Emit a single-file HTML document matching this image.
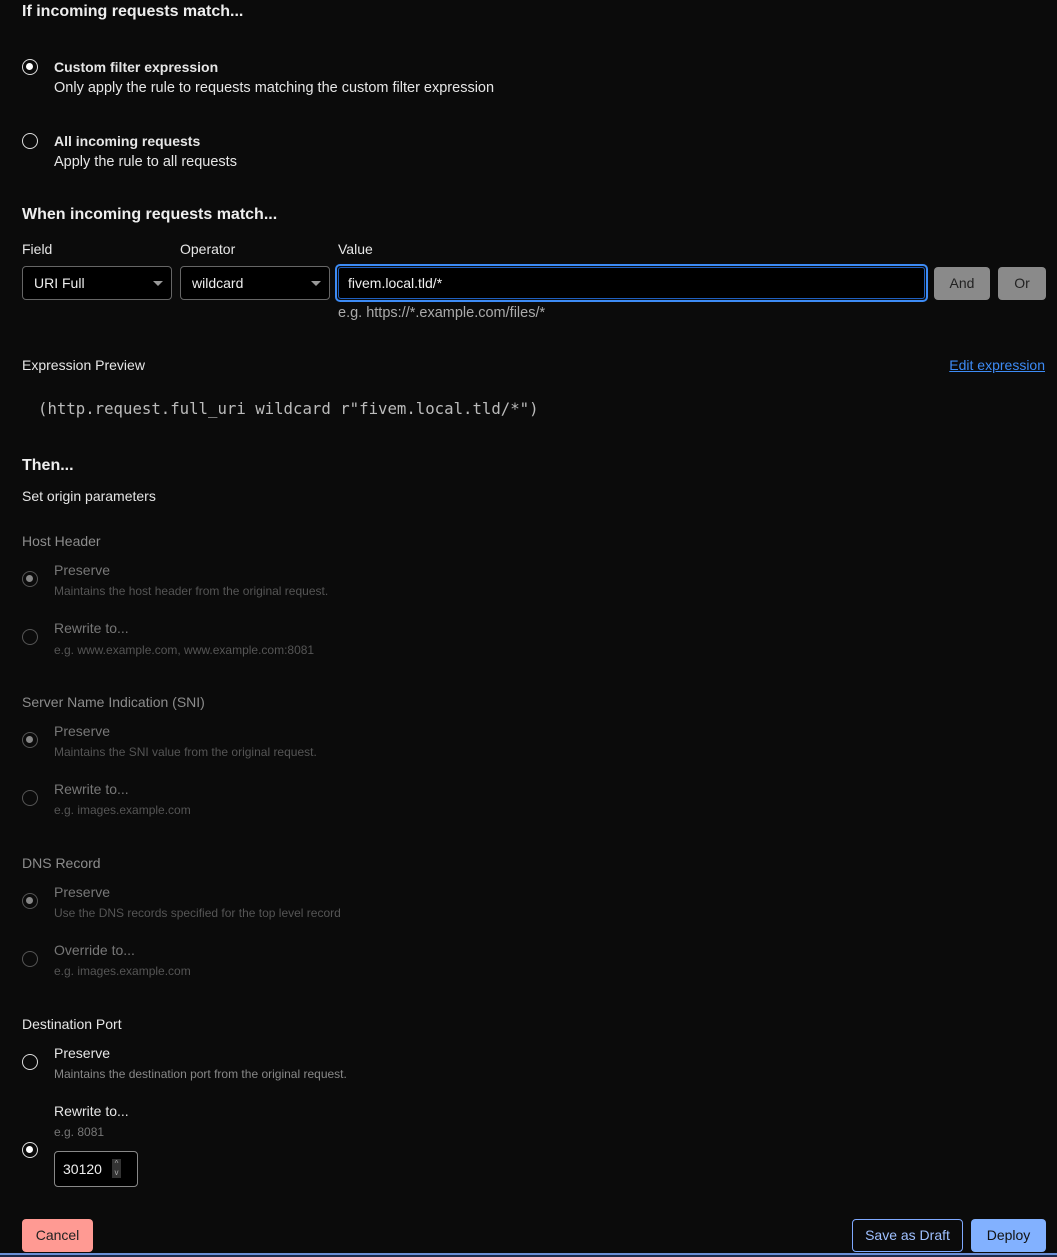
<!DOCTYPE html>
<html><head><meta charset="utf-8"><style>
*{box-sizing:border-box;margin:0;padding:0}
body{width:1057px;height:1257px;background:#0b0b0b;position:relative;overflow:hidden;font-family:"Liberation Sans",sans-serif;color:#e6e6e6}
.t{position:absolute;line-height:20px;white-space:nowrap}
.h{font-weight:bold;font-size:16px;color:#eee}
.s{font-size:14px}
.d{font-size:14.5px}
.g{font-size:12px;color:#555}
.gt{font-size:14px;color:#777}
.lbl{font-size:14px;color:#8c8c8c}
.r{position:absolute;left:22px;width:16px;height:16px;border-radius:50%;border:1.5px solid #ddd}
.r.on::after{content:"";position:absolute;left:3px;top:3px;width:7px;height:7px;border-radius:50%;background:#fff}
.r.dis{border-color:#555}
.r.dis.on::after{background:#888}
.sel{position:absolute;top:266px;height:34px;border:1px solid #666;border-radius:4px;background:#000;font-size:14px;line-height:32px;padding-left:11px;color:#eee}
.sel::after{content:"";position:absolute;right:8px;top:14px;border-left:5px solid transparent;border-right:5px solid transparent;border-top:5px solid #999}
.btn{position:absolute;border-radius:4px;font-size:14px;text-align:center}
</style></head><body>
<div class="t h" style="left:22px;top:2px">If incoming requests match...</div>
<div class="r on" style="top:59px"></div>
<div class="t s" style="left:54px;top:57px;font-weight:bold">Custom filter expression</div>
<div class="t d" style="left:54px;top:78px">Only apply the rule to requests matching the custom filter expression</div>
<div class="r" style="top:133px"></div>
<div class="t s" style="left:54px;top:131px;font-weight:bold">All incoming requests</div>
<div class="t d" style="left:54px;top:152px">Apply the rule to all requests</div>
<div class="t h" style="left:22px;top:205px">When incoming requests match...</div>
<div class="t s" style="left:22px;top:239px">Field</div>
<div class="t s" style="left:180px;top:239px">Operator</div>
<div class="t s" style="left:338px;top:239px">Value</div>
<div class="sel" style="left:22px;width:150px">URI Full</div>
<div class="sel" style="left:180px;width:150px">wildcard</div>
<div style="position:absolute;left:335px;top:264px;width:593px;height:38px;border:2px solid #3d8bf5;border-radius:5px;padding:1px"><div style="width:100%;height:100%;border:1px solid #1f5fbf;border-radius:3px;background:#000;font-size:14px;line-height:30px;padding-left:9px;color:#eee">fivem.local.tld/*</div></div>
<div class="btn" style="left:934px;top:267px;width:56px;height:33px;line-height:33px;background:#8a8a8a;color:#222">And</div>
<div class="btn" style="left:998px;top:267px;width:48px;height:33px;line-height:33px;background:#8a8a8a;color:#222">Or</div>
<div class="t" style="left:338px;top:303px;font-size:14.5px;color:#aaa">e.g. https://*.example.com/files/*</div>
<div class="t s" style="left:22px;top:355px">Expression Preview</div>
<div class="t s" style="right:12px;top:355px;color:#3d8bf5;text-decoration:underline">Edit expression</div>
<div class="t" style="left:38px;top:399px;font-family:'DejaVu Sans Mono','Liberation Mono',monospace;font-size:15.7px;color:#bbb">(http.request.full_uri wildcard r"fivem.local.tld/*")</div>
<div class="t h" style="left:22px;top:456px">Then...</div>
<div class="t s" style="left:22px;top:486px">Set origin parameters</div>

<div class="t lbl" style="left:22px;top:531px">Host Header</div>
<div class="r dis on" style="top:571px"></div>
<div class="t gt" style="left:54px;top:560px">Preserve</div>
<div class="t g" style="left:54px;top:581px">Maintains the host header from the original request.</div>
<div class="r dis" style="top:629px"></div>
<div class="t gt" style="left:54px;top:618px">Rewrite to...</div>
<div class="t g" style="left:54px;top:640px">e.g. www.example.com, www.example.com:8081</div>

<div class="t lbl" style="left:22px;top:692px">Server Name Indication (SNI)</div>
<div class="r dis on" style="top:732px"></div>
<div class="t gt" style="left:54px;top:721px">Preserve</div>
<div class="t g" style="left:54px;top:742px">Maintains the SNI value from the original request.</div>
<div class="r dis" style="top:790px"></div>
<div class="t gt" style="left:54px;top:779px">Rewrite to...</div>
<div class="t g" style="left:54px;top:800px">e.g. images.example.com</div>

<div class="t lbl" style="left:22px;top:853px">DNS Record</div>
<div class="r dis on" style="top:893px"></div>
<div class="t gt" style="left:54px;top:882px">Preserve</div>
<div class="t g" style="left:54px;top:903px">Use the DNS records specified for the top level record</div>
<div class="r dis" style="top:951px"></div>
<div class="t gt" style="left:54px;top:940px">Override to...</div>
<div class="t g" style="left:54px;top:961px">e.g. images.example.com</div>

<div class="t s" style="left:22px;top:1014px">Destination Port</div>
<div class="r" style="top:1054px"></div>
<div class="t s" style="left:54px;top:1043px">Preserve</div>
<div class="t g" style="left:54px;top:1064px;color:#888">Maintains the destination port from the original request.</div>
<div class="r on" style="top:1142px"></div>
<div class="t s" style="left:54px;top:1101px">Rewrite to...</div>
<div class="t g" style="left:54px;top:1122px;color:#777">e.g. 8081</div>
<div style="position:absolute;left:54px;top:1151px;width:84px;height:36px;border:1px solid #888;border-radius:4px;background:#000;font-size:14px;line-height:34px;padding-left:8px;color:#eee">30120<span style="position:absolute;left:57px;top:7px;width:9px;height:19px;background:#333;font-size:8px;line-height:9px;text-align:center;color:#aaa">^<br>v</span></div>

<div class="btn" style="left:22px;top:1219px;width:71px;height:33px;line-height:33px;background:#ff9a93;color:#222">Cancel</div>
<div class="btn" style="left:852px;top:1219px;width:111px;height:33px;line-height:31px;border:1px solid #7fa9ff;color:#9fc0ff">Save as Draft</div>
<div class="btn" style="left:971px;top:1219px;width:75px;height:33px;line-height:33px;background:#82b1ff;color:#111">Deploy</div>
<div style="position:absolute;left:0;top:1253px;width:1057px;height:2px;background:#6b8fd6"></div>
<div style="position:absolute;left:0;top:1255px;width:1057px;height:2px;background:#1d2a4a"></div>
</body></html>
